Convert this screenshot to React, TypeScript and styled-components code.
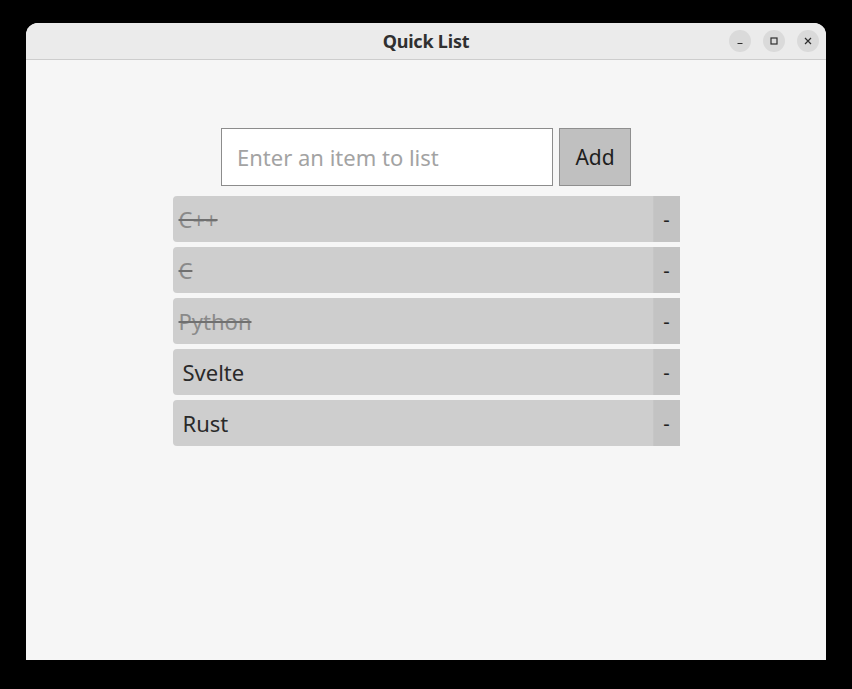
import React, { FC, useState } from "react";
import styled, { createGlobalStyle } from "styled-components";

const GlobalStyle = createGlobalStyle`
  html, body {
    margin: 0;
    padding: 0;
    background: #000;
  }
  body {
    font-family: "Noto Sans", "Open Sans", sans-serif;
  }
`;

const Screen = styled.div`
  width: 852px;
  height: 689px;
  padding: 23px 26px 29px;
  box-sizing: border-box;
  background: #000;
`;

const Window = styled.div`
  height: 100%;
  display: flex;
  flex-direction: column;
  border-radius: 12px 12px 0 0;
  overflow: hidden;
  background: #f6f6f6;
`;

const TitleBar = styled.header`
  height: 36px;
  flex: 0 0 36px;
  display: grid;
  grid-template-columns: 1fr auto 1fr;
  align-items: center;
  background: #ebebeb;
  border-bottom: 1px solid #cdcdcd;
`;

const Title = styled.h1`
  grid-column: 2;
  margin: 0;
  font-size: 18px;
  font-weight: 700;
  color: #303030;
  letter-spacing: -0.2px;
`;

const Controls = styled.div`
  grid-column: 3;
  justify-self: end;
  display: flex;
  gap: 12px;
  padding-right: 7px;
`;

const CtrlButton = styled.button`
  width: 22px;
  height: 22px;
  border-radius: 50%;
  border: none;
  padding: 0;
  background: #dadada;
  display: flex;
  align-items: center;
  justify-content: center;
  color: #2e2e2e;
`;

const Content = styled.main`
  flex: 1;
  display: flex;
  flex-direction: column;
  align-items: center;
  padding-top: 68px;
`;

const Form = styled.form`
  display: flex;
  gap: 6px;
  margin-bottom: 10px;
`;

const Input = styled.input`
  width: 332px;
  height: 58px;
  box-sizing: border-box;
  border: 1px solid #8c8c8c;
  background: #fff;
  padding: 0 15px;
  font-family: inherit;
  font-size: 22px;
  color: #2e2e2e;
  outline: none;
  &::placeholder {
    color: #a3a3a3;
  }
`;

const AddButton = styled.button`
  width: 72px;
  height: 58px;
  box-sizing: border-box;
  border: 1px solid #8f8f8f;
  background: #c0c0c0;
  font-family: inherit;
  font-size: 21px;
  color: #1e1e1e;
  padding: 0;
`;

const List = styled.ul`
  list-style: none;
  margin: 0;
  padding: 0;
  width: 507px;
  display: flex;
  flex-direction: column;
  gap: 5px;
`;

const Row = styled.li`
  height: 46px;
  display: flex;
  background: #cecece;
  border-radius: 4px 0 0 4px;
  overflow: hidden;
`;

const Label = styled.span<{ $done: boolean }>`
  flex: 1;
  display: flex;
  align-items: center;
  padding-left: ${(p) => (p.$done ? "6px" : "10px")};
  font-size: 22px;
  color: ${(p) => (p.$done ? "#8a8a8a" : "#2a2a2a")};
  text-decoration: ${(p) => (p.$done ? "line-through" : "none")};
  text-decoration-color: #707070;
`;

const Remove = styled.button`
  width: 27px;
  border: none;
  border-left: 1px solid #c6c6c6;
  background: #c3c3c3;
  font-family: inherit;
  font-size: 20px;
  color: #222;
  padding: 0;
`;

type Item = { text: string; done: boolean };

const initial: Item[] = [
  { text: "C++", done: true },
  { text: "C", done: true },
  { text: "Python", done: true },
  { text: "Svelte", done: false },
  { text: "Rust", done: false },
];

const App: FC = () => {
  const [items, setItems] = useState<Item[]>(initial);
  const [value, setValue] = useState("");

  const add = (e: React.FormEvent) => {
    e.preventDefault();
    if (!value.trim()) return;
    setItems([...items, { text: value.trim(), done: false }]);
    setValue("");
  };

  return (
    <Screen>
      <GlobalStyle />
      <Window>
        <TitleBar>
          <Title>Quick List</Title>
          <Controls>
            <CtrlButton aria-label="Minimize">
              <svg width="10" height="10" viewBox="0 0 10 10">
                <path d="M2.5 7.5h5" stroke="currentColor" strokeWidth="1.2" />
              </svg>
            </CtrlButton>
            <CtrlButton aria-label="Maximize">
              <svg width="10" height="10" viewBox="0 0 10 10">
                <rect x="2" y="2" width="6" height="6" fill="none" stroke="currentColor" strokeWidth="1.2" />
              </svg>
            </CtrlButton>
            <CtrlButton aria-label="Close">
              <svg width="10" height="10" viewBox="0 0 10 10">
                <path d="M2 2l6 6M8 2l-6 6" stroke="currentColor" strokeWidth="1.2" />
              </svg>
            </CtrlButton>
          </Controls>
        </TitleBar>
        <Content>
          <Form onSubmit={add}>
            <Input
              placeholder="Enter an item to list"
              value={value}
              onChange={(e) => setValue(e.target.value)}
            />
            <AddButton type="submit">Add</AddButton>
          </Form>
          <List>
            {items.map((it, i) => (
              <Row key={i}>
                <Label
                  $done={it.done}
                  onClick={() =>
                    setItems(items.map((x, j) => (j === i ? { ...x, done: !x.done } : x)))
                  }
                >
                  {it.text}
                </Label>
                <Remove onClick={() => setItems(items.filter((_, j) => j !== i))}>-</Remove>
              </Row>
            ))}
          </List>
        </Content>
      </Window>
    </Screen>
  );
};

export default App;
